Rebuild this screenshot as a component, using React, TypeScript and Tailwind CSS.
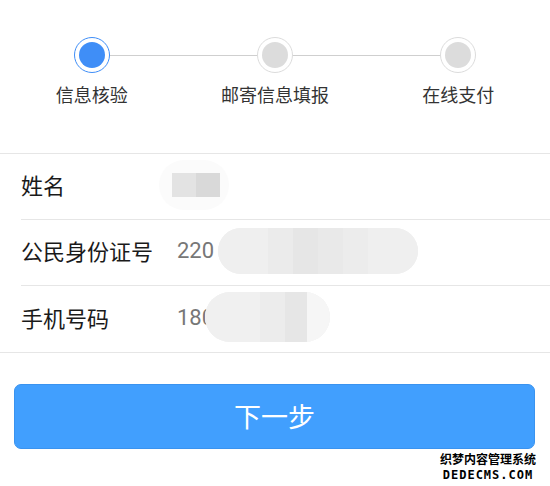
import React from "react";

const cjk = { fontFamily: '"Noto Sans CJK SC", "Noto Sans", sans-serif' };
const num = { fontFamily: 'Roboto, "Noto Sans CJK SC", sans-serif' };

function Step({ active, label }: { active?: boolean; label: string }) {
  return (
    <div className="flex flex-col items-center">
      <div
        className={
          "relative z-10 flex h-[36px] w-[36px] items-center justify-center rounded-full bg-white border-[1.5px] " +
          (active ? "border-[#3f8ef7]" : "border-[#dcdcdc]")
        }
      >
        <div
          className={
            "h-[26px] w-[26px] rounded-full " + (active ? "bg-[#3f8ef7]" : "bg-[#dcdcdc]")
          }
        />
      </div>
      <div className="mt-[10px] text-[18px] leading-[22px] text-[#333]" style={cjk}>
        {label}
      </div>
    </div>
  );
}

function Row({
  label,
  value,
  blob,
  last,
}: {
  label: string;
  value?: string;
  blob: React.ReactNode;
  last?: boolean;
}) {
  return (
    <div
      className={
        "ml-[21px] flex h-[66px] items-center pb-[4px] " + (last ? "" : "border-b border-[#e6e6e6]")
      }
    >
      <div className="w-[156px] shrink-0 text-[22px] text-[#1a1a1a]" style={cjk}>
        {label}
      </div>
      {value && (
        <div className="text-[22px] text-[#777]" style={num}>
          {value}
        </div>
      )}
      {blob}
    </div>
  );
}

export default function App() {
  return (
    <div className="relative h-[486px] w-[550px] overflow-hidden bg-white" style={cjk}>
      {/* Steps */}
      <div className="relative h-[153px] pt-[37px]">
        <div className="absolute left-[92px] right-[92px] top-[55px] h-px bg-[#cfcfcf]" />
        <div className="grid grid-cols-3">
          <Step active label="信息核验" />
          <Step label="邮寄信息填报" />
          <Step label="在线支付" />
        </div>
      </div>

      {/* Form */}
      <div className="border-y border-[#e6e6e6]">
        <Row
          label="姓名"
          blob={
            <div className="relative ml-[-18px] flex h-[50px] w-[70px] items-center rounded-full bg-[#fbfbfb] pl-[13px]">
              <div className="h-[24px] w-[24px] bg-[#e3e3e3]" />
              <div className="h-[24px] w-[24px] bg-[#d9d9d9]" />
            </div>
          }
        />
        <Row
          label="公民身份证号"
          value="220"
          blob={
            <div className="ml-[4px] flex h-[46px] w-[200px] overflow-hidden rounded-full bg-[#eeeeee]">
              <div className="w-[50px] bg-[#efefef]" />
              <div className="w-[25px] bg-[#ebebeb]" />
              <div className="w-[25px] bg-[#e6e6e6]" />
              <div className="w-[25px] bg-[#e9e9e9]" />
              <div className="w-[25px] bg-[#ececec]" />
              <div className="w-[50px] bg-[#efefef]" />
            </div>
          }
        />
        <Row
          label="手机号码"
          value="180"
          last
          blob={
            <div className="ml-[-9px] flex h-[50px] w-[125px] overflow-hidden rounded-full bg-[#f0f0f0]">
              <div className="w-[55px] bg-[#f0f0f0]" />
              <div className="w-[25px] bg-[#ececec]" />
              <div className="w-[22px] bg-[#e6e6e6]" />
              <div className="w-[23px] bg-[#f6f6f6]" />
            </div>
          }
        />
      </div>

      {/* Button */}
      <div className="px-[14px] pt-[31px]">
        <button
          className="flex h-[65px] w-[521px] items-center justify-center rounded-[7px] border border-[#3a93ef] bg-[#419ffe] text-[27px] text-white"
          style={cjk}
        >
          下一步
        </button>
      </div>

      {/* Watermark */}
      <div
        className="absolute bottom-[3px] right-[14px] flex flex-col items-center text-black"
        style={{ textShadow: "1px 0 #fff, -1px 0 #fff, 0 1px #fff, 0 -1px #fff" }}
      >
        <div className="text-[12px] font-bold leading-[16px]" style={cjk}>
          织梦内容管理系统
        </div>
        <div
          className="text-[12px] font-bold leading-[16px] tracking-[1px]"
          style={{ fontFamily: '"DejaVu Sans Mono", monospace' }}
        >
          DEDECMS.COM
        </div>
      </div>
    </div>
  );
}
